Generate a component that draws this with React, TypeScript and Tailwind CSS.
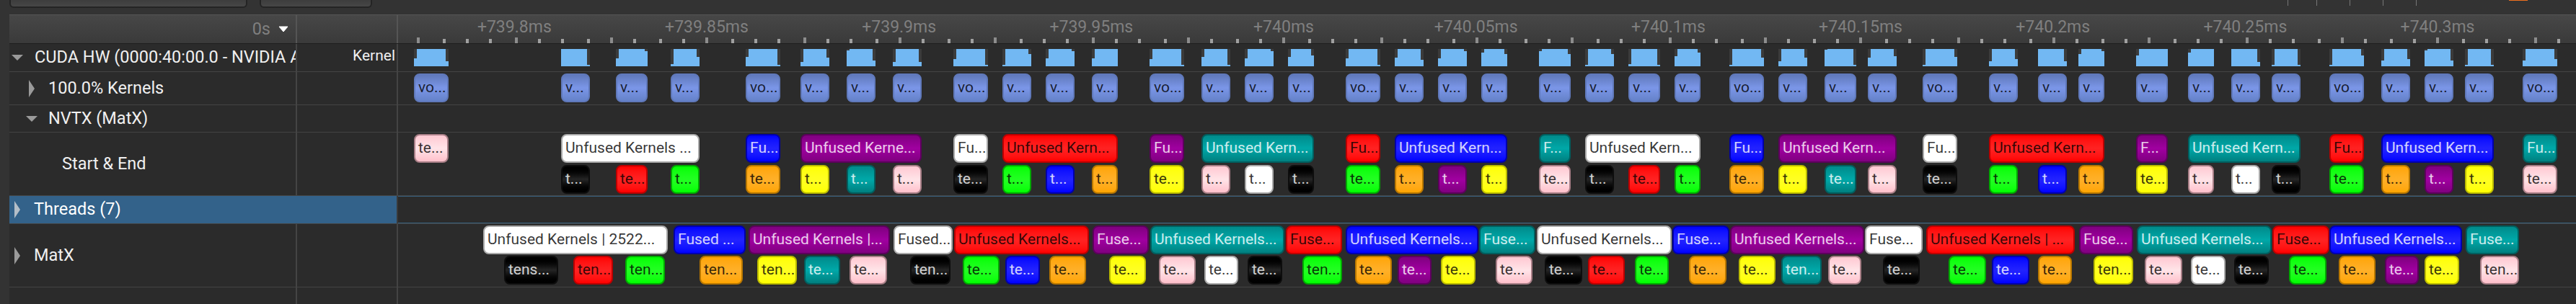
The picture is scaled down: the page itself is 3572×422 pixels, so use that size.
const ORIGIN = 552

const CHIP: Record<string, string> = {
  kernel: 'border-[#6079bb] from-[#6079bb] via-[#7b96e8] to-[#6582c9] text-black/80',
  white: 'border-[#aaaaaa] from-white via-white to-white text-black/80',
  black: 'border-[#0d0d0d] from-black via-[#252525] to-black text-white/80',
  red: 'border-[#bb0000] from-[#ff0000] via-[#ff2222] to-[#ff0000] text-black/80',
  green: 'border-[#00aa00] from-[#00ff00] via-[#22ff22] to-[#00ff00] text-black/80',
  blue: 'border-[#0000aa] from-[#0000ff] via-[#2222ff] to-[#0000ff] text-white/80',
  orange: 'border-[#b87700] from-[#ffa500] via-[#ffb028] to-[#ffa500] text-black/80',
  yellow: 'border-[#bbbb00] from-[#ffff00] via-[#ffff22] to-[#ffff00] text-black/80',
  teal: 'border-[#005f5f] from-[#008b8b] via-[#00a8a8] to-[#008080] text-white/80',
  pink: 'border-[#a87f87] from-[#ffc8d2] via-[#ffe4e8] to-[#ffc0cb] text-black/80',
  purple: 'border-[#5c005c] from-[#800080] via-[#a000a0] to-[#800080] text-white/80',
}

// x, x end, colour, label
type Span = [number, number, string, string]

// x, x end, left notch depth, right notch depth
const KERNELS: [number, number, number, number][] = [
  [574, 622, 13, 17], [778, 818, 0, 22], [854, 898, 13, 3], [930, 970, 21, 11], [1034, 1082, 11, 22],
  [1110, 1150, 18, 12], [1174, 1214, 2, 16], [1238, 1278, 18, 18], [1322, 1370, 14, 22], [1390, 1430, 22, 7],
  [1450, 1490, 13, 3], [1514, 1550, 13, 0], [1594, 1642, 14, 22], [1666, 1706, 11, 22], [1726, 1766, 13, 3],
  [1786, 1822, 11, 9], [1866, 1914, 13, 22], [1934, 1974, 12, 15], [1994, 2034, 13, 3], [2054, 2090, 5, 7],
  [2134, 2178, 3, 7], [2198, 2238, 22, 7], [2258, 2302, 21, 22], [2322, 2358, 10, 5], [2398, 2446, 22, 12],
  [2466, 2506, 17, 12], [2530, 2574, 1, 22], [2590, 2630, 12, 10], [2666, 2714, 22, 11], [2758, 2798, 17, 14],
  [2826, 2866, 0, 17], [2882, 2918, 7, 3], [2962, 3006, 9, 0], [3034, 3070, 5, 0], [3094, 3134, 0, 18],
  [3150, 3190, 22, 22], [3230, 3278, 22, 9], [3302, 3342, 16, 14], [3362, 3402, 2, 16], [3418, 3458, 22, 22],
  [3498, 3546, 16, 14],
]

const START_COLORS = [
  'black', 'red', 'green', 'orange', 'yellow', 'teal', 'pink', 'black', 'green', 'blue', 'orange', 'yellow', 'pink', 'white',
  'black', 'green', 'orange', 'purple', 'yellow', 'pink', 'black', 'red', 'green', 'orange', 'yellow', 'teal', 'pink',
  'black', 'green', 'blue', 'orange', 'yellow', 'pink', 'white', 'black', 'green', 'orange', 'purple', 'yellow', 'pink',
]

const START_TOP: Span[] = [
  [574, 622, 'pink', 'te...'], [778, 970, 'white', 'Unfused Kernels ...'], [1034, 1082, 'blue', 'Fu...'],
  [1110, 1278, 'purple', 'Unfused Kerne...'], [1322, 1370, 'white', 'Fu...'], [1390, 1550, 'red', 'Unfused Kern...'],
  [1594, 1642, 'purple', 'Fu...'], [1666, 1822, 'teal', 'Unfused Kern...'], [1866, 1914, 'red', 'Fu...'],
  [1934, 2090, 'blue', 'Unfused Kern...'], [2134, 2178, 'teal', 'F...'], [2198, 2358, 'white', 'Unfused Kern...'],
  [2398, 2446, 'blue', 'Fu...'], [2466, 2630, 'purple', 'Unfused Kern...'], [2666, 2714, 'white', 'Fu...'],
  [2758, 2918, 'red', 'Unfused Kern...'], [2962, 3006, 'purple', 'F...'], [3034, 3190, 'teal', 'Unfused Kern...'],
  [3230, 3278, 'red', 'Fu...'], [3302, 3458, 'blue', 'Unfused Kern...'], [3498, 3546, 'teal', 'Fu...'],
]

const MATX_TOP: Span[] = [
  [670, 926, 'white', 'Unfused Kernels | 2522...'], [934, 1034, 'blue', 'Fused ...'], [1038, 1234, 'purple', 'Unfused Kernels |...'],
  [1239, 1321, 'white', 'Fused...'], [1323, 1510, 'red', 'Unfused Kernels...'], [1515, 1593, 'purple', 'Fuse...'],
  [1595, 1781, 'teal', 'Unfused Kernels...'], [1783, 1861, 'red', 'Fuse...'], [1866, 2050, 'blue', 'Unfused Kernels...'],
  [2051, 2129, 'teal', 'Fuse...'], [2131, 2318, 'white', 'Unfused Kernels...'], [2319, 2398, 'blue', 'Fuse...'],
  [2399, 2585, 'purple', 'Unfused Kernels...'], [2586, 2666, 'white', 'Fuse...'], [2671, 2877, 'red', 'Unfused Kernels | ...'],
  [2883, 2958, 'purple', 'Fuse...'], [2963, 3150, 'teal', 'Unfused Kernels...'], [3151, 3230, 'red', 'Fuse...'],
  [3230, 3414, 'blue', 'Unfused Kernels...'], [3419, 3493, 'teal', 'Fuse...'],
]

const MATX_BOTTOM: Span[] = [
  [699, 774, 'black', 'tens...'], [795, 850, 'red', 'ten...'], [867, 922, 'green', 'ten...'], [970, 1030, 'orange', 'ten...'],
  [1050, 1105, 'yellow', 'ten...'], [1115, 1165, 'teal', 'te...'], [1178, 1230, 'pink', 'te...'], [1262, 1318, 'black', 'ten...'],
  [1335, 1386, 'green', 'te...'], [1394, 1442, 'blue', 'te...'], [1455, 1506, 'orange', 'te...'], [1538, 1589, 'yellow', 'te...'],
  [1607, 1658, 'pink', 'te...'], [1670, 1717, 'white', 'te...'], [1730, 1778, 'black', 'te...'], [1806, 1861, 'green', 'ten...'],
  [1879, 1930, 'orange', 'te...'], [1938, 1985, 'purple', 'te...'], [1998, 2046, 'yellow', 'te...'], [2074, 2125, 'pink', 'te...'],
  [2142, 2194, 'black', 'te...'], [2202, 2253, 'red', 'te...'], [2267, 2314, 'green', 'te...'], [2342, 2394, 'orange', 'te...'],
  [2411, 2462, 'yellow', 'te...'], [2470, 2526, 'teal', 'ten...'], [2535, 2581, 'pink', 'te...'], [2611, 2662, 'black', 'te...'],
  [2702, 2754, 'green', 'te...'], [2762, 2814, 'blue', 'te...'], [2826, 2873, 'orange', 'te...'], [2903, 2958, 'yellow', 'ten...'],
  [2974, 3026, 'pink', 'te...'], [3038, 3086, 'white', 'te...'], [3098, 3146, 'black', 'te...'], [3174, 3226, 'green', 'te...'],
  [3243, 3294, 'orange', 'te...'], [3307, 3354, 'purple', 'te...'], [3362, 3410, 'yellow', 'te...'], [3439, 3493, 'pink', 'ten...'],
]

const TIME_LABELS = ['739.8', '739.85', '739.9', '739.95', '740', '740.05', '740.1', '740.15', '740.2', '740.25', '740.3']

const TICKS = Array.from({ length: 90 }, (_, i) => ({
  x: Math.ceil((580 + (i * 100) / 3) / 4) * 4,
  major: i % 4 === 0,
}))

function Chip({ span, top }: { span: Span; top: number }) {
  const [x0, x1, color, text] = span
  return (
    <div
      className={`absolute h-10 rounded-lg border-2 bg-linear-to-b pl-1 text-[21px] leading-[34px] whitespace-nowrap overflow-hidden ${CHIP[color]}`}
      style={{ left: x0 - ORIGIN, width: x1 - x0, top }}
    >
      {text}
    </div>
  )
}

function Marker({ x0, x1, l, r }: { x0: number; x1: number; l: number; r: number }) {
  const w = x1 - x0
  return (
    <svg className="absolute top-[7px]" style={{ left: x0 - ORIGIN }} width={w} height={24}>
      <rect width={w} height={24} fill="#3b3b3b" />
      <polygon
        points={`4,0 ${w - 4},0 ${w - 4},${r} ${w},${r} ${w},24 0,24 0,${l} 4,${l}`}
        fill="#72b8f3"
      />
    </svg>
  )
}

function Down({ className }: { className?: string }) {
  return (
    <svg className={className} width="16" height="8" viewBox="0 0 16 8">
      <polygon points="0,0 16,0 8,8" fill="#9a9a9a" />
    </svg>
  )
}

function Right({ className, fill = '#9a9a9a' }: { className?: string; fill?: string }) {
  return (
    <svg className={className} width="8" height="24" viewBox="0 0 8 24">
      <polygon points="0,0 8,12 0,24" fill={fill} />
    </svg>
  )
}

function Row({
  height,
  label,
  side,
  selected,
  children,
}: {
  height: string
  label: React.ReactNode
  side?: string
  selected?: boolean
  children?: React.ReactNode
}) {
  return (
    <div className={`flex border-b border-[#444444] ${height}`}>
      <div className={`w-[399px] shrink-0 flex items-center overflow-hidden whitespace-nowrap border-r-2 text-[23.5px] ${selected ? 'bg-[#33628a] border-[#33628a] text-white' : 'border-[#444444] text-[#f0f0f0]'}`}>
        {label}
      </div>
      <div className={`w-[140px] shrink-0 border-r-2 pr-[2px] text-right text-[21px] leading-[30px] text-[#f0f0f0] ${selected ? 'bg-[#33628a] border-[#3a3a3a]' : 'border-[#444444] pt-[1px]'}`}>
        {side}
      </div>
      <div className={`relative flex-1 ${selected ? 'border-y border-[#37607f]' : ''}`}>{children}</div>
    </div>
  )
}

export default function App() {
  return (
    <div className="relative h-[422px] w-[3572px] overflow-hidden bg-[#333333] font-['Roboto',sans-serif]">
      {/* toolbar, cut off by the crop */}
      <div className="flex h-5 items-start gap-[17px] pl-[13px]">
        <div className="h-[11px] w-[330px] rounded-b-md border-x-2 border-b-2 border-[#242424] bg-linear-to-b from-[#3d3d3d] to-[#474747]" />
        <div className="h-[11px] w-[156px] rounded-b-md border-x-2 border-b-2 border-[#242424] bg-linear-to-b from-[#3d3d3d] to-[#474747]" />
        <div className="relative flex-1">
          {[3170, 3210, 3256, 3302, 3348].map(x => (
            <div key={x} className="absolute top-0 h-2 w-px bg-[#777777]" style={{ left: x - 531 }} />
          ))}
          <div className="absolute top-0 h-px w-[26px] bg-[#f07020]" style={{ left: 3477 - 531 }} />
        </div>
      </div>

      <div className="ml-[13px] bg-[#2b2b2b]">
        {/* time ruler */}
        <div className="flex h-[41px] border-y border-t-[#555555] border-b-[#1e1e1e] bg-linear-to-b from-[#474747] to-[#3a3a3a]">
          <div className="flex w-[399px] shrink-0 items-center justify-end gap-[11px] border-r-2 border-[#555555] pr-[10px] text-[23.5px] text-[#7f7f7f]">
            <span>0s</span>
            <svg width="14" height="9" viewBox="0 0 14 9">
              <polygon points="1,1 13,1 7,8" fill="#ffffff" stroke="#ffffff" strokeLinejoin="round" />
            </svg>
          </div>
          <div className="w-[140px] shrink-0 border-r-2 border-[#555555]" />
          <div className="relative flex-1">
            {TIME_LABELS.map((t, i) => (
              <span
                key={t}
                className="absolute top-0 -translate-x-1/2 text-[23px] whitespace-nowrap text-[#7f7f7f]"
                style={{ left: 713.33 + i * 266.67 - ORIGIN }}
              >
                +{t}ms
              </span>
            ))}
            {TICKS.map(t => (
              <div
                key={t.x}
                className={`absolute bottom-0 w-1 ${t.major ? 'h-2 bg-[#8d8d8d]' : 'h-[6px] bg-[#a0a0a0]'}`}
                style={{ left: t.x - 2 - ORIGIN }}
              />
            ))}
          </div>
        </div>

        <Row
          height="h-[39px]"
          side="Kernel"
          label={
            <>
              <Down className="ml-[3px] shrink-0" />
              <span className="ml-4">CUDA HW (0000:40:00.0 - NVIDIA A100</span>
            </>
          }
        >
          {KERNELS.map(([x0, x1, l, r]) => (
            <Marker key={x0} x0={x0} x1={x1} l={l} r={r} />
          ))}
        </Row>

        <Row
          height="h-[46px]"
          label={
            <>
              <Right className="ml-[27px] shrink-0" />
              <span className="ml-[19px]">100.0% Kernels</span>
            </>
          }
        >
          {KERNELS.map(([x0, x1]) => (
            <Chip key={x0} span={[x0, x1, 'kernel', x1 - x0 > 46 ? 'vo...' : 'v...']} top={2} />
          ))}
        </Row>

        <Row
          height="h-[38px]"
          label={
            <>
              <Down className="ml-[23px] shrink-0" />
              <span className="ml-[15px]">NVTX (MatX)</span>
            </>
          }
        />

        <Row height="h-[88px]" label={<span className="ml-[73px]">Start &amp; End</span>}>
          {START_TOP.map(s => (
            <Chip key={s[0]} span={s} top={2} />
          ))}
          {KERNELS.slice(1).map(([x0, x1], i) => (
            <Chip key={x0} span={[x0, x1, START_COLORS[i], x1 - x0 > 42 ? 'te...' : 't...']} top={45} />
          ))}
        </Row>

        <Row
          height="h-[39px]"
          selected
          label={
            <>
              <Right className="ml-[7px] shrink-0" fill="#b4bec8" />
              <span className="ml-[19px]">Threads (7)</span>
            </>
          }
        />

        <Row
          height="h-[88px]"
          label={
            <>
              <Right className="ml-[7px] shrink-0" />
              <span className="ml-[19px]">MatX</span>
            </>
          }
        >
          {MATX_TOP.map(s => (
            <Chip key={s[0]} span={s} top={2} />
          ))}
          {MATX_BOTTOM.map(s => (
            <Chip key={s[0]} span={s} top={44} />
          ))}
        </Row>

        <div className="flex h-[23px]">
          <div className="w-[399px] border-r-2 border-[#444444]" />
          <div className="w-[140px] border-r-2 border-[#444444]" />
        </div>
      </div>
    </div>
  )
}
